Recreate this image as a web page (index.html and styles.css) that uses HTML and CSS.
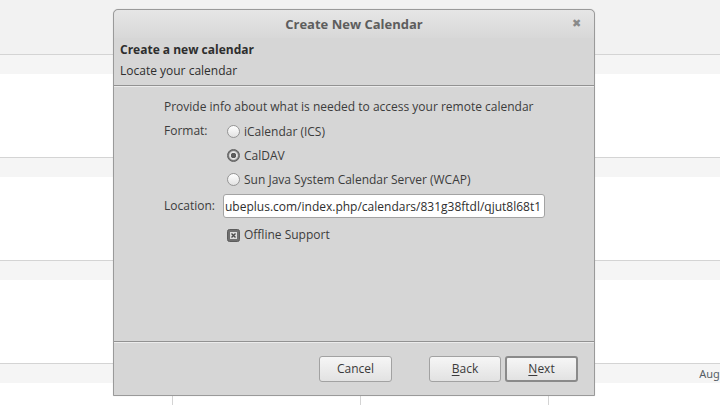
FILE: index.html
```html
<!DOCTYPE html>
<html lang="en">
<head>
    <meta charset="UTF-8">
    <meta name="viewport" content="width=device-width, initial-scale=1.0">
    <title>Create New Calendar</title>
    <link rel="stylesheet" href="styles.css">
</head>
<body>

<div class="calendar">
    <div class="cal-top"></div>
    <div class="cal-week">
        <div class="day"><div class="day-head"></div></div>
        <div class="day"><div class="day-head"></div></div>
        <div class="day"><div class="day-head"></div></div>
        <div class="day"><div class="day-head"></div></div>
    </div>
    <div class="cal-week">
        <div class="day"><div class="day-head"></div></div>
        <div class="day"><div class="day-head"></div></div>
        <div class="day"><div class="day-head"></div></div>
        <div class="day"><div class="day-head"></div></div>
    </div>
    <div class="cal-week">
        <div class="day"><div class="day-head"></div></div>
        <div class="day"><div class="day-head"></div></div>
        <div class="day"><div class="day-head"></div></div>
        <div class="day"><div class="day-head"></div></div>
    </div>
    <div class="cal-week">
        <div class="day"><div class="day-head"></div></div>
        <div class="day"><div class="day-head"></div></div>
        <div class="day"><div class="day-head"></div></div>
        <div class="day"><div class="day-head">Aug 1</div></div>
    </div>
</div>

<div class="dialog">
    <div class="titlebar">
        <span class="title">Create New Calendar</span>
        <span class="close">&#x2716;</span>
    </div>

    <div class="header">
        <div class="header-title">Create a new calendar</div>
        <div class="header-sub">Locate your calendar</div>
    </div>

    <div class="content">
        <div class="intro">Provide info about what is needed to access your remote calendar</div>

        <div class="label">Format:</div>
        <div class="radios">
            <div class="radio"><span class="radio-dot"></span>iCalendar (ICS)</div>
            <div class="radio"><span class="radio-dot checked"></span>CalDAV</div>
            <div class="radio"><span class="radio-dot"></span>Sun Java System Calendar Server (WCAP)</div>
        </div>

        <div class="label">Location:</div>
        <div class="location"><span class="location-text">ubeplus.com/index.php/calendars/831g38ftdl/qjut8l68t1</span></div>

        <div></div>
        <div class="check">
            <svg class="check-box" width="13" height="13" viewBox="0 0 13 13">
                <rect x="0.5" y="0.5" width="12" height="12" rx="2" fill="#6f6f6f" stroke="#5c5c5c"/>
                <rect x="3" y="3" width="7" height="7" fill="#dcdcdc"/>
                <path d="M4.5 4.5 L8.5 8.5 M8.5 4.5 L4.5 8.5" stroke="#4a4a4a" stroke-width="1.4"/>
            </svg>
            Offline Support
        </div>
    </div>

    <div class="footer">
        <button class="btn btn-cancel">Cancel</button>
        <button class="btn btn-back"><u>B</u>ack</button>
        <button class="btn btn-default"><u>N</u>ext</button>
    </div>
</div>

</body>
</html>
```

FILE: styles.css
```css
body {
    margin: 0;
    width: 720px;
    height: 405px;
    overflow: hidden;
    position: relative;
    font-family: "Open Sans", "Noto Sans", sans-serif;
    font-size: 12px;
    color: #3c3c3c;
    background-color: #fff;
}

/* calendar behind the dialog */

.calendar {
    display: flex;
    flex-direction: column;
    width: 752px;
    margin-left: -16px;
}

.cal-top {
    height: 54px;
    background-color: #f2f2f2;
}

.cal-week {
    display: grid;
    grid-template-columns: repeat(4, 188px);
    height: 102px;
    border-top: 1px solid #d4d4d4;
}

.calendar .cal-week:last-child {
    height: 60px;
}

.day {
    border-left: 1px solid #d4d4d4;
}

.day-head {
    height: 19px;
    background-color: #f5f5f5;
    text-align: right;
    padding-right: 7px;
    font-family: "Noto Sans", sans-serif;
    font-size: 11px;
    line-height: 20px;
    color: #555e66;
    white-space: nowrap;
}

/* dialog */

.dialog {
    position: absolute;
    left: 113px;
    top: 9px;
    width: 480px;
    height: 385px;
    border: 1px solid #9a9a9a;
    border-radius: 5px 5px 0 0;
    background-color: #d6d6d6;
    display: flex;
    flex-direction: column;
    box-shadow: 0 0 1px rgba(0, 0, 0, 0.2);
}

.titlebar {
    height: 28px;
    position: relative;
    display: flex;
    align-items: center;
    justify-content: center;
    border-radius: 5px 5px 0 0;
    background: linear-gradient(#e6e6e6, #d8d8d8);
}

.title {
    font-weight: bold;
    font-size: 13px;
    color: #5d5d5d;
    margin-top: -1px;
}

.close {
    position: absolute;
    right: 13px;
    top: 5px;
    font-size: 11px;
    color: #8a8a8a;
}

.header {
    padding: 1px 6px 4px;
    border-bottom: 1px solid #929292;
    box-shadow: 0 1px 0 #ececec;
}

.header-title {
    font-weight: bold;
    line-height: 21px;
    color: #2e2e2e;
}

.header-sub {
    line-height: 21px;
    color: #2e2e2e;
}

.content {
    flex: 1;
    display: grid;
    grid-template-columns: 59px 322px;
    grid-auto-rows: min-content;
    padding: 11px 0 0 50px;
}

.intro {
    grid-column: 1 / 3;
    line-height: 20px;
    margin-bottom: 4px;
}

.label {
    line-height: 20px;
}

.radios {
    display: flex;
    flex-direction: column;
    padding-left: 4px;
    margin-bottom: 3px;
}

.radio {
    display: flex;
    align-items: center;
    height: 24px;
    margin-top: -2px;
    margin-bottom: 2px;
}

.radio-dot {
    width: 11px;
    height: 11px;
    border: 1px solid #959595;
    border-radius: 50%;
    background: linear-gradient(#ffffff, #e2e2e2);
    margin-right: 4px;
}

.radio-dot.checked {
    border-color: #5e5e5e;
    background: radial-gradient(circle, #5a5a5a 0, #5a5a5a 2.5px, #e8e8e8 3px, #d0d0d0 4px, #7a7a7a 5px);
}

.location {
    height: 22px;
    border: 1px solid #a3a3a3;
    border-radius: 3px;
    background-color: #fff;
    display: flex;
    align-items: center;
    overflow: hidden;
    white-space: nowrap;
    color: #2e2e2e;
    margin-top: -2px;
}

.location-text {
    margin-left: 1px;
}

.check {
    display: flex;
    align-items: center;
    padding-left: 4px;
    margin-top: 9px;
    line-height: 16px;
}

.check-box {
    margin-right: 4px;
}

.footer {
    height: 54px;
    border-top: 1px solid #929292;
    box-shadow: inset 0 1px 0 #ececec;
    display: flex;
    align-items: center;
    justify-content: flex-end;
    padding: 0 16px 0 0;
    box-sizing: border-box;
}

.btn {
    width: 73px;
    height: 26px;
    font-family: "Open Sans", "Noto Sans", sans-serif;
    font-size: 12px;
    color: #3a3a3a;
    background: linear-gradient(#f6f6f6, #e2e2e2);
    border: 1px solid #a2a2a2;
    border-radius: 3px;
    padding: 0;
}

.btn-cancel {
    margin-right: 37px;
}

.btn-back {
    width: 72px;
    margin-right: 4px;
}

.btn u {
    text-decoration-thickness: 1px;
    text-underline-offset: 2px;
}

.btn-default {
    border: 2px solid #8a8a8a;
}
```
